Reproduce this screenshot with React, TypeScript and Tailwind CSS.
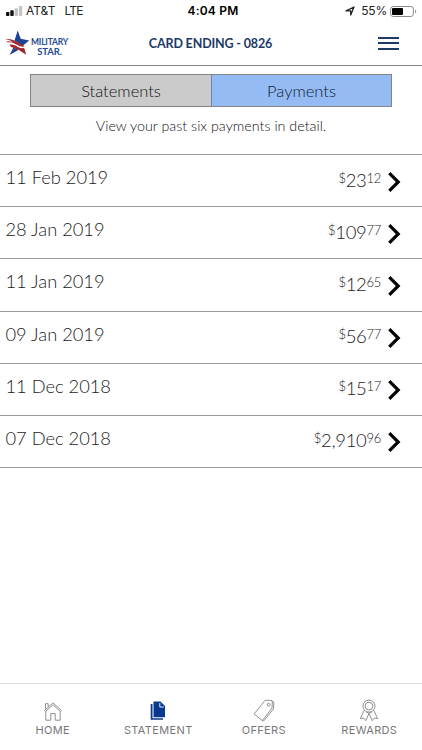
import type { ReactNode } from 'react'

const PAYMENTS = [
  { date: '11 Feb 2019', dollars: '23', cents: '12' },
  { date: '28 Jan 2019', dollars: '109', cents: '77' },
  { date: '11 Jan 2019', dollars: '12', cents: '65' },
  { date: '09 Jan 2019', dollars: '56', cents: '77' },
  { date: '11 Dec 2018', dollars: '15', cents: '17' },
  { date: '07 Dec 2018', dollars: '2,910', cents: '96' },
]

function StatusBar() {
  return (
    <div className="grid h-[22px] grid-cols-3 items-center font-['Inter','Liberation_Sans',sans-serif] text-xs text-[#222]">
      <div className="flex items-center pl-1.5">
        <svg width="17" height="10" viewBox="0 0 17 10">
          <rect x="0" y="6" width="3.4" height="4" rx="0.8" fill="#111" />
          <rect x="4.3" y="4.3" width="3.4" height="5.7" rx="0.8" fill="#111" />
          <rect x="8.6" y="2.2" width="3.4" height="7.8" rx="0.8" fill="#c4c4c4" />
          <rect x="12.9" y="0" width="3.4" height="10" rx="0.8" fill="#c4c4c4" />
        </svg>
        <span className="ml-[3px]">AT&amp;T</span>
        <span className="ml-[9px] tracking-[-0.8px]">LTE</span>
      </div>
      <div className="pl-1 text-center font-semibold tracking-[0.2px] text-black">4:04 PM</div>
      <div className="flex items-center justify-end pr-[5px]">
        <svg width="10" height="10" viewBox="0 0 10 10" fill="none" stroke="#222" strokeWidth="1.3" strokeLinejoin="round">
          <path d="M9 1 5.7 9V4.8H1z" />
        </svg>
        <span className="ml-1.5 tracking-[-0.2px]">55%</span>
        <svg className="ml-[3px]" width="27" height="11" viewBox="0 0 27 11">
          <rect x="0.6" y="0.5" width="22.8" height="10" rx="2.6" fill="none" stroke="#8a8a8a" />
          <rect x="2" y="2" width="11" height="7" rx="1" fill="#000" />
          <path d="M25 3.6c1.7.7 1.7 3.1 0 3.8z" fill="#999" />
        </svg>
      </div>
    </div>
  )
}

function Logo() {
  return (
    <div className="flex items-center">
      <svg width="26" height="26" viewBox="0 0 26 26">
        <path d="m12.700.500 3 8.300 8.500 1.700-6.400 5.300-8.300-5.300z" fill="#1d4594" />
        <path d="m8.300 17.800 5.500 2L4.500 25z" fill="#1d4594" />
        <path d="M0 9c6-.5 9.200 1 12.500 3.300 2 1.300 4 2.200 5.800 2.200l.5 2.200c-3.300.2-6-1.400-9-3-2.800-1.500-5.200-1.700-7-1.100L1.500 11.300c2.200-.2 4.300.1 6 .7C5.200 10.200 2.600 9.500 0 9z" fill="#a0262b" />
        <path d="M4.500 14.500c4-.3 6.200 1.200 8.400 2.400 2.100 1.100 4 1.500 6.300 1.200l2 6.700-7.700-5c-2.800-.4-4.800-2.500-7.500-2.900z" fill="#a0262b" />
      </svg>
      <div className="mt-2 text-center font-bold text-[#254d93]">
        <div className="text-[8.500px] leading-[9px] tracking-[-0.2px]">MILITARY</div>
        <div className="text-[9.500px] leading-[10px] tracking-[-0.1px]">STAR.</div>
      </div>
    </div>
  )
}

function Header() {
  return (
    <header className="flex h-11 items-center border-b border-[#858585] pb-px pl-[5px] pr-[23px]">
      <div className="w-[116px]">
        <Logo />
      </div>
      <h1 className="flex-1 pr-[78px] pt-[3px] text-center text-[12.5px] font-bold tracking-[-0.15px] text-[#1c3a66]">
        CARD ENDING - 0826
      </h1>
      <button aria-label="Menu" className="flex w-[21px] flex-col gap-[3.500px]">
        <span className="h-0.5 w-full bg-[#1c3a66]" />
        <span className="h-0.5 w-full bg-[#1c3a66]" />
        <span className="h-0.5 w-full bg-[#1c3a66]" />
      </button>
    </header>
  )
}

function PaymentRow({ date, dollars, cents }: { date: string; dollars: string; cents: string }) {
  return (
    <li className="flex h-[52.200px] justify-between border-b border-[#9a9a9a] pl-[5.500px] pr-[21px] font-light text-[#1a1a1a]">
      <span className="pt-[9px] text-[18.300px] leading-[26px]">{date}</span>
      <span className="flex pt-[11.500px]">
        <span className="flex text-[18.500px] leading-[26px] tracking-[-0.3px]">
          <span className="text-[13px] leading-[22px]">$</span>
          {dollars}
          <span className="text-[13px] leading-[22px]">{cents}</span>
        </span>
        <svg className="ml-[7px] mt-[5px]" width="13" height="20" viewBox="0 0 13 20" fill="none" stroke="#000" strokeWidth="3.2">
          <path d="m1.300 1.200 8.900 8.800-8.900 8.800" />
        </svg>
      </span>
    </li>
  )
}

function NavItem({ label, children }: { label: string; children: ReactNode }) {
  return (
    <a className="flex flex-1 flex-col items-center pt-[15px]">
      <svg width="24" height="24" viewBox="0 0 24 24" fill="none" stroke="#858585" strokeWidth="0.9">
        {children}
      </svg>
      <span className="font-['Inter',sans-serif] text-[11px] leading-[14px] tracking-[0.350px] text-[#777]">{label}</span>
    </a>
  )
}

function BottomNav() {
  return (
    <nav className="mt-auto flex h-[67px] border-t border-[#dcdcdc]">
      <NavItem label="HOME">
        <path d="m3.500 11.500 8.500-7.600 8.500 7.600-1 1-7.500-6.700-7.500 6.700zM4.500 10.400V4.700h2.700v3.200M4.800 12.300v8.900h5v-6.600h4.400v6.600h5v-8.900" />
      </NavItem>
      <NavItem label="STATEMENT">
        <path d="M7.500 2.500h7l4.500 4.500V18.300H7.500z" fill="#08398f" stroke="none" />
        <path d="M4.700 5h1.800v14.200h10.500v1.600H4.700z" fill="#08398f" stroke="none" />
        <path d="M13.800 4v4h4" stroke="#fff" />
      </NavItem>
      <NavItem label="OFFERS">
        <path d="m13.200 1.300 6 .1 1.100 1.400-.3 6.300-9.700 12.500-8.200-6.700zM19.200 1.400l2.600 1.600-.3 6.900-9.900 12.100-1.300-.4" />
        <circle cx="16.600" cy="5.700" r="1.400" />
      </NavItem>
      <NavItem label="REWARDS">
        <circle cx="12" cy="7.100" r="6" />
        <circle cx="12" cy="7.100" r="3.900" />
        <path d="m7.300 11.300-4 8.300 3.400-.5 2.100 2.600 3.200-7.300 3.200 7.300 2.100-2.600 3.400.5-4-8.300M9 13l3 1.400 3-1.400" />
      </NavItem>
    </nav>
  )
}

export default function App() {
  return (
    <div className="flex h-screen flex-col overflow-hidden bg-white font-['Lato',sans-serif]">
      <StatusBar />
      <Header />
      <main>
        <div className="mx-[30px] mt-2 grid h-[33px] grid-cols-2 border border-[#858585] text-center text-[16.500px] leading-[32px] font-light text-[#111]">
          <button className="h-[31px] bg-[#cbcbcb]">Statements</button>
          <button className="h-[31px] border-l border-[#6c86ad] bg-[#94bbf3] text-[#0c1a30]">Payments</button>
        </div>
        <p className="pt-[9px] text-center text-[14.300px] leading-5 font-light text-[#111]">
          View your past six payments in detail.
        </p>
        <ul className="mt-[18px] border-t border-[#9a9a9a]">
          {PAYMENTS.map((payment) => <PaymentRow key={payment.date} {...payment} />)}
        </ul>
      </main>
      <BottomNav />
    </div>
  )
}
